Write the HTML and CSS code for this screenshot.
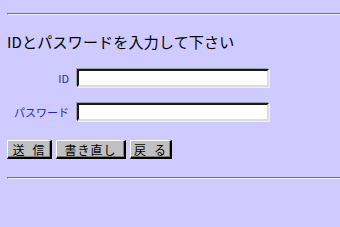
FILE: index.html
```html
<!DOCTYPE html>
<html lang="ja">
<head>
<meta charset="utf-8">
<link rel="stylesheet" href="styles.css">
</head>
<body>
<div class="page">
  <hr class="rule rule-top">
  <h1 class="title">IDとパスワードを入力して下さい</h1>
  <form class="form">
    <div class="row">
      <label class="label" for="uid">ID</label>
      <input class="field" id="uid" type="text">
    </div>
    <div class="row">
      <label class="label" for="pw">パスワード</label>
      <input class="field" id="pw" type="password">
    </div>
    <div class="buttons">
      <button class="btn btn-send" type="button">送&ensp;信</button>
      <button class="btn btn-reset" type="button">書き直し</button>
      <button class="btn btn-back" type="button">戻&ensp;る</button>
    </div>
  </form>
  <hr class="rule rule-bottom">
</div>
</body>
</html>
```
FILE: styles.css
```css
html, body {
  margin: 0;
  padding: 0;
  background: #cfcaff;
}
.page {
  padding-left: 7px;
  font-family: "Noto Sans CJK JP", "DejaVu Sans", sans-serif;
}
.rule {
  margin: 0;
  height: 0;
  border: 0;
  border-top: 1px solid #6e6a98;
  border-bottom: 1px solid #f4f2ff;
  border-left: 1px solid #6e6a98;
}
.rule-top {
  margin-top: 13px;
}
.title {
  margin: 18px 0 0 0;
  font-size: 15px;
  line-height: 18px;
  font-weight: normal;
  color: #000;
  letter-spacing: 0.2px;
}
.form {
  margin: 18px 0 0 0;
  display: flex;
  flex-direction: column;
}
.row {
  display: flex;
  align-items: center;
  gap: 8px;
  height: 18px;
  margin-bottom: 16px;
}
.label {
  width: 62px;
  text-align: right;
  font-size: 11px;
  font-weight: normal;
  color: #2626bc;
  line-height: 18px;
}
.field {
  box-sizing: border-box;
  width: 192px;
  height: 18px;
  margin: 0;
  padding: 0 2px;
  background: #fff;
  border-style: solid;
  border-width: 2px;
  border-color: #1a1a1a #dcdcdc #dcdcdc #1a1a1a;
  box-shadow: -1px -1px 0 #a0a0a0, 1px 1px 0 #f0f0f0;
}
.buttons {
  display: flex;
  gap: 4px;
  margin-top: 3px;
}
.btn {
  box-sizing: border-box;
  height: 19px;
  margin: 0;
  padding: 0;
  font-family: "Noto Sans CJK JP", "DejaVu Sans", sans-serif;
  font-size: 12px;
  font-weight: normal;
  letter-spacing: 1px;
  line-height: 15px;
  color: #000;
  background: #c0c0c0;
  border-style: solid;
  border-width: 1px 2px 2px 1px;
  border-color: #ffffff #000000 #000000 #ffffff;
  box-shadow: inset -1px -1px 0 #808080;
}
.btn-send { width: 45px; }
.btn-reset { width: 70px; }
.btn-back { width: 42px; }
.rule-bottom {
  margin-top: 18px;
}
```
